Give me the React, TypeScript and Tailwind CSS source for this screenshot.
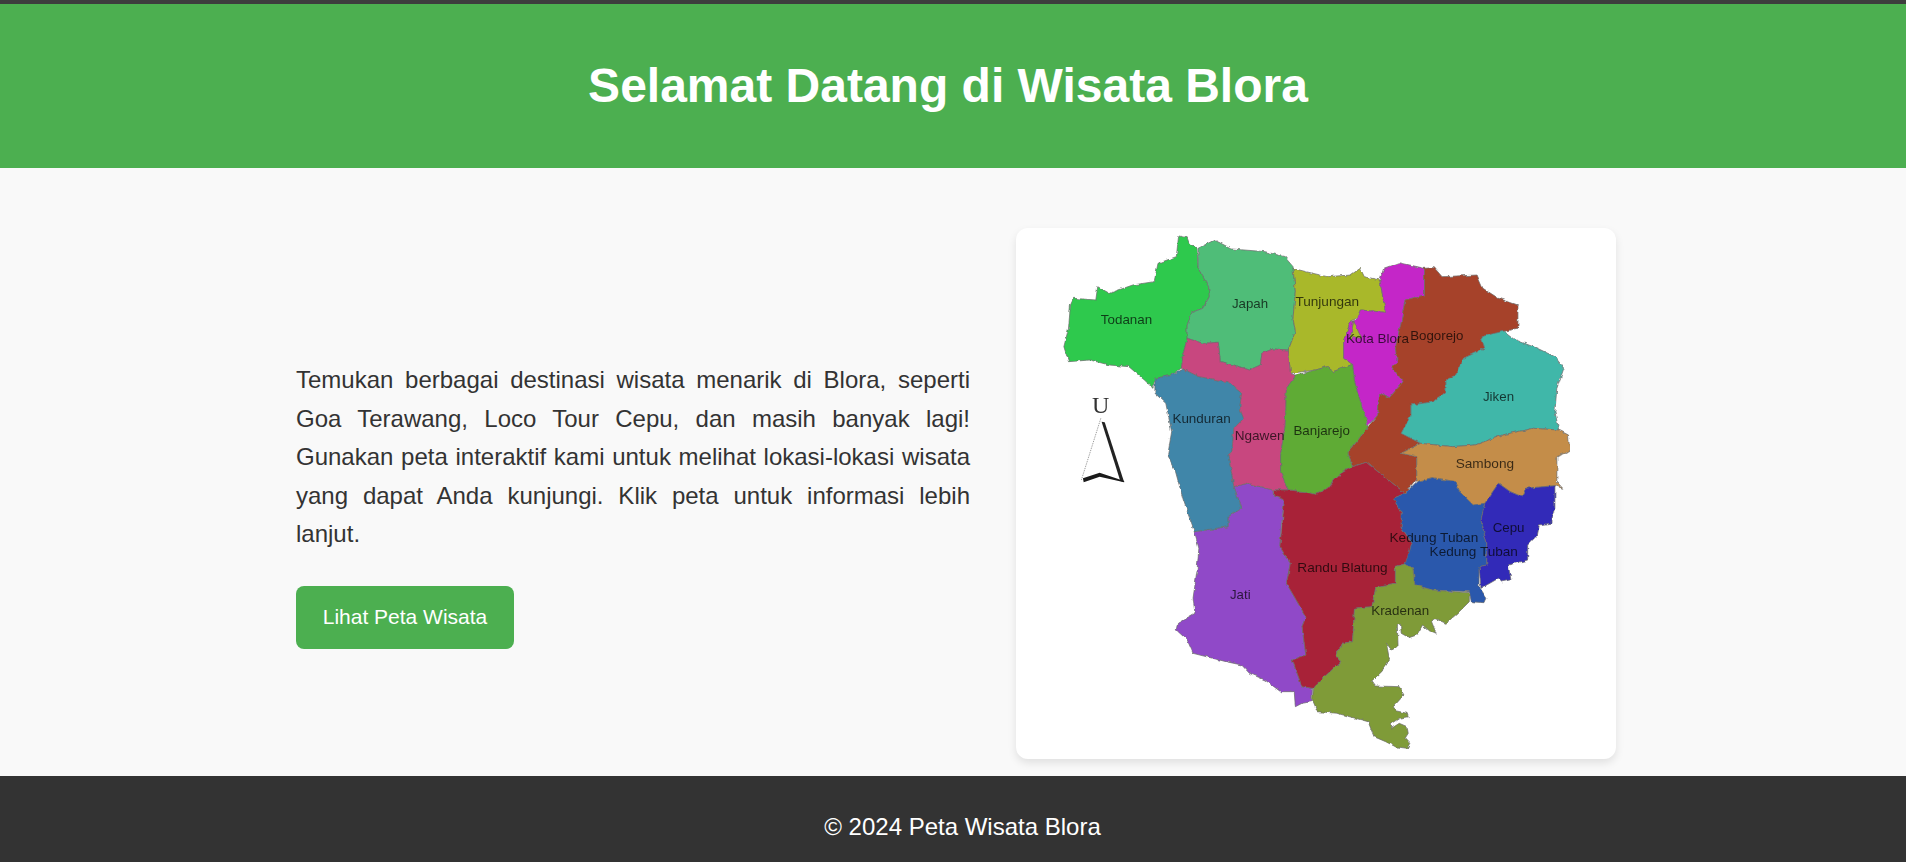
const regions: { name: string; fill: string; points: string }[] = [
  {
    name: "Jati",
    fill: "#9049c8",
    points:
      "595,775 660,795 662,812 690,825 682,900 678,965 705,1015 695,1075 745,1175 735,1205 745,1290 710,1305 735,1385 762,1390 760,1430 735,1435 718,1445 715,1400 680,1400 640,1365 600,1345 580,1320 540,1310 455,1285 440,1245 412,1215 415,1195 460,1165 455,1120 465,1040 470,970 458,920 545,905 545,875 580,850 560,785",
  },
  {
    name: "Todanan",
    fill: "#2fc94e",
    points:
      "418,32 440,38 445,55 465,70 468,130 478,150 495,185 497,215 480,250 452,262 440,300 440,340 430,385 425,430 395,452 357,460 352,490 330,465 290,425 240,420 190,405 135,410 123,365 135,310 140,240 148,220 205,225 210,185 240,205 300,180 355,170 365,115 412,95",
  },
  {
    name: "Japah",
    fill: "#4fbd78",
    points:
      "468,70 510,45 555,72 640,80 690,95 712,125 718,200 712,280 718,320 700,375 660,372 632,385 628,420 600,435 560,420 525,410 520,352 480,355 440,340 440,300 452,262 480,250 497,215 495,185 478,150 468,130",
  },
  {
    name: "Tunjungan",
    fill: "#a9b82a",
    points:
      "712,130 745,140 800,155 860,150 885,130 895,155 935,165 950,262 885,255 875,280 860,290 842,350 842,400 865,418 815,440 800,425 770,435 705,445 700,375 718,320 712,280 718,200",
  },
  {
    name: "Kota Blora",
    fill: "#c428c8",
    points:
      "935,165 945,130 985,113 1050,130 1050,210 1000,225 990,290 975,370 980,410 965,425 995,470 960,518 935,505 930,570 905,600 885,530 870,470 865,418 842,400 842,345 860,290 875,285 885,255 950,262",
  },
  { name: "Tunjungan sliver", fill: "#a9b82a", points: "868,288 880,320 888,340 870,335 858,345" },
  {
    name: "Bogorejo",
    fill: "#a6422a",
    points:
      "1050,130 1075,128 1095,155 1185,150 1200,190 1240,220 1290,240 1290,310 1250,320 1195,335 1205,370 1150,400 1130,450 1105,465 1105,500 1075,530 1015,540 1015,570 990,625 1040,655 990,685 1030,695 1030,760 1000,805 900,712 865,725 853,683 905,605 930,570 935,505 960,518 995,470 965,425 980,410 975,370 990,290 1000,225 1050,210",
  },
  {
    name: "Jiken",
    fill: "#40b7a9",
    points:
      "1255,318 1285,345 1340,370 1385,395 1408,430 1390,490 1385,560 1395,615 1330,610 1250,630 1180,660 1120,665 1040,655 990,625 1015,570 1015,540 1075,530 1105,500 1105,465 1130,450 1150,400 1205,370 1195,335",
  },
  {
    name: "Sambong",
    fill: "#c48d48",
    points:
      "990,685 1040,655 1120,665 1180,660 1250,630 1330,610 1395,615 1420,630 1423,680 1390,695 1390,770 1405,790 1385,782 1310,790 1300,815 1270,800 1240,775 1205,835 1175,840 1140,800 1130,770 1070,758 1030,770 1030,695",
  },
  {
    name: "Kunduran",
    fill: "#3f86a9",
    points:
      "357,460 395,452 430,432 470,455 545,470 580,505 575,550 585,580 560,610 555,680 545,690 552,730 560,785 580,850 545,875 545,905 458,920 430,825 410,740 390,690 400,620 385,535 357,505",
  },
  {
    name: "Ngawen",
    fill: "#c8467f",
    points:
      "440,340 480,355 520,352 525,410 560,420 600,435 628,420 632,385 660,372 700,375 705,445 720,450 695,490 692,600 680,690 680,740 700,795 660,795 595,775 560,785 552,730 545,690 555,680 560,610 585,580 575,550 580,505 545,470 470,455 430,432 425,430 430,385",
  },
  {
    name: "Banjarejo",
    fill: "#5fab35",
    points:
      "720,450 770,435 800,425 815,440 865,418 870,470 885,530 905,605 853,683 865,725 835,745 800,790 770,808 740,800 700,795 680,740 680,690 692,600 695,490",
  },
  {
    name: "Randu Blatung",
    fill: "#a82439",
    points:
      "900,712 1000,805 970,820 990,865 990,905 1018,955 1005,1015 975,1025 975,1075 925,1085 915,1145 870,1150 865,1250 840,1255 820,1290 835,1310 762,1390 735,1385 710,1305 745,1290 735,1205 745,1175 695,1075 705,1015 678,965 690,825 662,812 662,795 700,795 740,800 770,808 800,790 835,745 865,725",
  },
  {
    name: "Kedung Tuban",
    fill: "#2a58ac",
    points:
      "970,820 1000,805 1030,770 1070,758 1130,770 1140,800 1175,840 1205,835 1195,885 1210,955 1210,1020 1190,1025 1190,1085 1210,1120 1205,1133 1170,1130 1165,1100 1070,1095 1025,1080 1020,1030 1000,1017 1018,955 990,905 990,865",
  },
  {
    name: "Cepu",
    fill: "#322bb8",
    points:
      "1205,835 1240,775 1270,800 1300,815 1310,790 1385,782 1385,850 1375,880 1375,895 1345,900 1340,930 1315,960 1315,1005 1265,1020 1272,1065 1250,1070 1240,1060 1195,1090 1190,1025 1210,1020 1210,955 1195,885",
  },
  {
    name: "Kradenan",
    fill: "#7f9b37",
    points:
      "975,1025 1000,1017 1020,1030 1025,1080 1070,1095 1165,1103 1165,1130 1135,1165 1105,1195 1075,1180 1068,1190 1080,1225 1060,1215 1045,1200 1030,1230 1010,1238 990,1225 988,1197 980,1200 982,1265 965,1275 952,1255 960,1305 940,1340 915,1367 925,1383 985,1385 997,1410 970,1445 975,1457 1005,1465 1008,1475 985,1480 965,1495 965,1510 985,1495 1005,1505 1008,1525 1000,1540 1012,1555 1005,1570 975,1565 950,1550 920,1535 905,1490 825,1465 775,1460 762,1425 765,1385 835,1310 820,1290 840,1255 865,1250 870,1150 915,1145 925,1085 975,1075",
  },
];

// x0, x1, baseline, measured off the map
const labels: [string, number, number, number][] = [
  ["Todanan", 218, 350, 298],
  ["Japah", 555, 648, 250],
  ["Tunjungan", 718, 882, 242],
  ["Kota Blora", 848, 1010, 354],
  ["Bogorejo", 1013, 1150, 345],
  ["Jiken", 1200, 1280, 527],
  ["Kunduran", 402, 552, 593],
  ["Ngawen", 562, 690, 645],
  ["Banjarejo", 713, 858, 630],
  ["Sambong", 1130, 1280, 730],
  ["Kedung Tuban", 960, 1188, 950],
  ["Kedung Tuban", 1063, 1290, 993],
  ["Cepu", 1225, 1307, 922],
  ["Randu Blatung", 723, 955, 1040],
  ["Jati", 550, 603, 1123],
  ["Kradenan", 913, 1062, 1170],
];

const SX = 600 / 1542;
const SY = 1 / 3;

function BloraMap() {
  return (
    <svg width="600" height="531" viewBox="0 0 600 531" className="block">
      <defs>
        <filter id="rough" x="0" y="0" width="100%" height="100%" filterUnits="objectBoundingBox">
          <feTurbulence type="fractalNoise" baseFrequency="0.18" numOctaves="2" seed="4" />
          <feDisplacementMap in="SourceGraphic" scale="3.5" xChannelSelector="R" yChannelSelector="G" />
        </filter>
      </defs>
      <g filter="url(#rough)">
        <g transform={`scale(${SX} ${SY}) translate(0 -9)`}>
          {regions.map((r) => (
            <polygon
              key={r.name}
              points={r.points}
              fill={r.fill}
              stroke="#6b6b6b"
              strokeWidth="2"
              strokeLinejoin="round"
            />
          ))}
        </g>
      </g>
      <g transform={`scale(${SX} ${SY}) translate(0 -9)`}>
        <line x1="218" y1="580" x2="168" y2="765" stroke="#777" strokeWidth="2" strokeDasharray="4 3" />
        <polygon points="220,590 228,592 278,772 268,768" fill="#222" />
        <polygon points="172,760 215,743 278,768 278,772 215,755 174,772" fill="#1a1a1a" />
      </g>
      <text x="76" y="185" fontSize="24" fill="#333" style={{ fontFamily: '"Liberation Serif", serif' }}>
        U
      </text>
      {labels.map(([text, x0, x1, y]) => (
        <text
          key={`${text}-${x0}`}
          x={x0 * SX}
          y={(y - 9) * SY}
          fontSize="13.5"
          textLength={(x1 - x0) * SX}
          lengthAdjust="spacingAndGlyphs"
          fill="#000"
          fillOpacity="0.7"
          style={{ fontFamily: '"Liberation Sans", Arial, sans-serif' }}
        >
          {text}
        </text>
      ))}
    </svg>
  );
}

export default function App() {
  return (
    <div className="min-h-[862px] flex flex-col bg-[#f9f9f9] text-[#333] font-['Liberation_Sans',Arial,sans-serif]">
      <div className="h-1 bg-[#3d3d3d]" />
      <header className="h-[164px] flex items-center justify-center pr-[10px] bg-[#4caf50] text-white">
        <h1 className="text-[48px] font-bold">Selamat Datang di Wisata Blora</h1>
      </header>
      <main className="flex-1 flex items-center gap-[46px] pl-[296px] pt-[60px] pb-[17px]">
        <div className="w-[674px] pt-[23px]">
          <p className="text-[24px] leading-[38.4px] text-justify mb-[32px]">
            Temukan berbagai destinasi wisata menarik di Blora, seperti Goa Terawang, Loco Tour Cepu, dan masih banyak
            lagi! Gunakan peta interaktif kami untuk melihat lokasi-lokasi wisata yang dapat Anda kunjungi. Klik peta
            untuk informasi lebih lanjut.
          </p>
          <button className="w-[218px] h-[63px] rounded-lg bg-[#4caf50] text-white text-[21px]">
            Lihat Peta Wisata
          </button>
        </div>
        <div className="w-[600px] h-[531px] bg-white rounded-xl shadow-[0_4px_8px_rgba(0,0,0,0.1)] overflow-hidden blur-[0.25px]">
          <BloraMap />
        </div>
      </main>
      <footer className="h-[86px] flex items-center justify-center pl-[19px] pt-[16px] bg-[#333] text-white text-[24px]">
        © 2024 Peta Wisata Blora
      </footer>
    </div>
  );
}
